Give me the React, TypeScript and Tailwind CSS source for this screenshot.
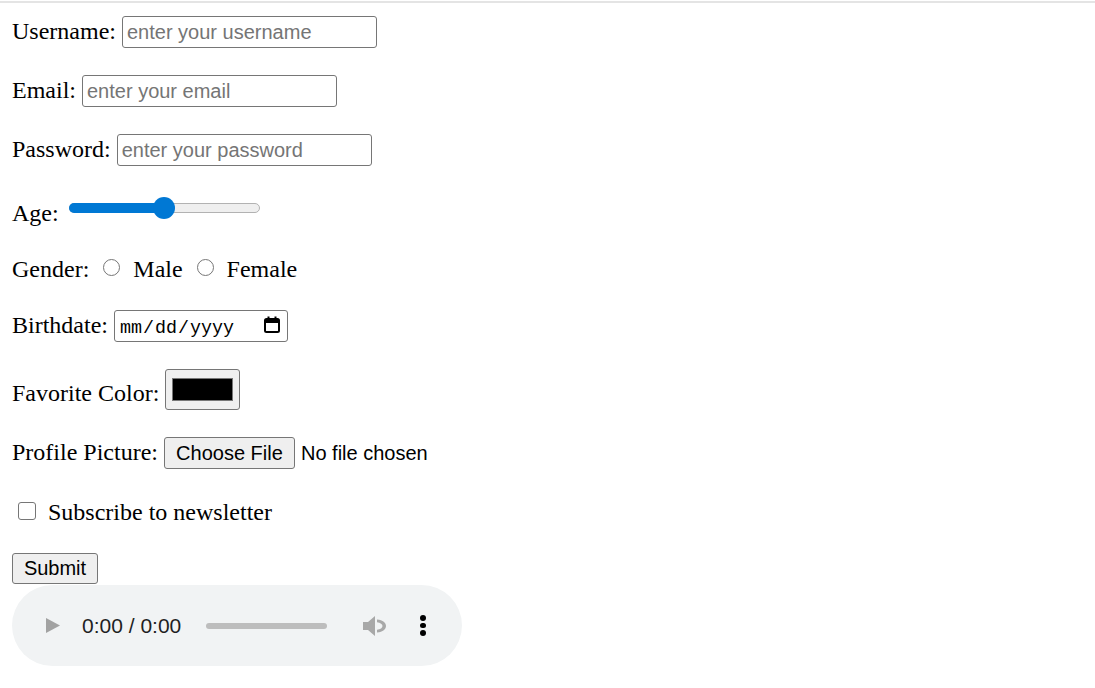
import React from "react";

const serif = "font-['Liberation_Serif','Times_New_Roman',serif] text-[24px] leading-[28px] text-black whitespace-nowrap";
const sans = "font-['Liberation_Sans',Arial,sans-serif]";

function TextBox({ placeholder }: { placeholder: string }) {
  return (
    <div
      className={`ml-[6px] w-[255px] h-[32px] shrink-0 border border-[#767676] rounded-[3px] pl-[4px] flex items-center text-[20px] leading-[23px] text-[#757575] whitespace-nowrap ${sans}`}
    >
      {placeholder}
    </div>
  );
}

function Radio({ ml }: { ml: string }) {
  return <div className={`${ml} mt-[4px] w-[17px] h-[17px] shrink-0 rounded-full border-[1.5px] border-[#767676] bg-white`} />;
}

export default function App() {
  return (
    <div className="min-h-screen bg-white text-black">
      <div className="h-[1px]" />
      <div className="h-[2px] bg-[#e4e4e4]" />
      <form className="pl-[12px] flex flex-col">
        {/* Username */}
        <div className="mt-[13px] h-[32px] flex items-start">
          <span className={`mt-[1px] ${serif}`}>Username:</span>
          <TextBox placeholder="enter your username" />
        </div>
        {/* Email */}
        <div className="mt-[27px] h-[32px] flex items-start">
          <span className={`mt-[1px] ${serif}`}>Email:</span>
          <TextBox placeholder="enter your email" />
        </div>
        {/* Password */}
        <div className="mt-[27px] h-[32px] flex items-start">
          <span className={`mt-[1px] ${serif}`}>Password:</span>
          <TextBox placeholder="enter your password" />
        </div>
        {/* Age */}
        <div className="mt-[30px] h-[24px] flex items-start">
          <span className={`mt-[3px] ${serif}`}>Age:</span>
          <div className="ml-[10px] relative w-[191px] h-[24px] shrink-0 flex items-center">
            <div className="w-full h-[10px] rounded-full bg-[#efefef] border border-[#b2b2b2]" />
            <div className="absolute left-0 top-[7px] w-[96px] h-[10px] rounded-l-full bg-[#0078d4]" />
            <div className="absolute left-[84px] top-[1px] w-[22px] h-[22px] rounded-full bg-[#0078d4]" />
          </div>
        </div>
        {/* Gender */}
        <div className="mt-[35px] h-[28px] flex items-start">
          <span className={serif}>Gender:</span>
          <Radio ml="ml-[14px]" />
          <span className={`ml-[13px] ${serif}`}>Male</span>
          <Radio ml="ml-[14px]" />
          <span className={`ml-[13px] ${serif}`}>Female</span>
        </div>
        {/* Birthdate */}
        <div className="mt-[27px] h-[32px] flex items-start">
          <span className={`mt-[1px] ${serif}`}>Birthdate:</span>
          <div className="ml-[6px] w-[174px] h-[32px] shrink-0 border border-[#767676] rounded-[3px] flex items-start pl-[5px] pr-[7px]">
            <div className="mt-[7px] flex font-['Liberation_Mono','DejaVu_Sans_Mono',monospace] text-[18.33px] leading-[21px] text-black">
              <span>mm</span>
              <span className="mx-[1px]">/</span>
              <span>dd</span>
              <span className="mx-[1px]">/</span>
              <span>yyyy</span>
            </div>
            <svg className="ml-auto mt-[5px]" width="16" height="17" viewBox="0 0 16 17">
              <rect x="1" y="3" width="14" height="13" rx="1.5" fill="none" stroke="#000" strokeWidth="2" />
              <rect x="1" y="3" width="14" height="4" fill="#000" />
              <rect x="3.5" y="0.5" width="2" height="3" fill="#000" />
              <rect x="10.5" y="0.5" width="2" height="3" fill="#000" />
            </svg>
          </div>
        </div>
        {/* Favorite color */}
        <div className="mt-[27px] h-[41px] flex items-start">
          <span className={`mt-[10px] ${serif}`}>Favorite Color:</span>
          <div className="ml-[6px] w-[75px] h-[41px] shrink-0 bg-[#efefef] border border-[#767676] rounded-[3px] flex items-center justify-center">
            <div className="w-[61px] h-[23px] bg-black border border-[#777777]" />
          </div>
        </div>
        {/* Profile picture */}
        <div className="mt-[27px] h-[32px] flex items-start">
          <span className={`mt-[1px] ${serif}`}>Profile Picture:</span>
          <div
            className={`ml-[6px] w-[131px] h-[32px] shrink-0 bg-[#efefef] border border-[#767676] rounded-[3px] flex items-center justify-center text-[20px] leading-[23px] text-black whitespace-nowrap ${sans}`}
          >
            Choose File
          </div>
          <span className={`ml-[6px] text-[20px] leading-[32px] text-black whitespace-nowrap ${sans}`}>No file chosen</span>
        </div>
        {/* Newsletter */}
        <div className="mt-[29px] h-[28px] flex items-start">
          <div className="ml-[6px] mt-[4px] w-[18px] h-[18px] shrink-0 rounded-[3px] border-[1.5px] border-[#767676] bg-white" />
          <span className={`ml-[12px] ${serif}`}>Subscribe to newsletter</span>
        </div>
        {/* Submit */}
        <div className="mt-[27px] flex">
          <div
            className={`w-[86px] h-[31px] bg-[#efefef] border border-[#767676] rounded-[3px] flex items-center justify-center text-[20px] leading-[23px] text-black ${sans}`}
          >
            Submit
          </div>
        </div>
        {/* Audio */}
        <div className="mt-[1px] w-[450px] h-[81px] rounded-full bg-[#f1f3f4] flex items-center pl-[34px]">
          <svg width="14" height="15" viewBox="0 0 14 15" className="shrink-0">
            <polygon points="0,0 14,7.5 0,15" fill="#a2a2a2" />
          </svg>
          <div className={`ml-[22px] w-[100px] shrink-0 text-[21px] leading-[23px] text-[#1f1f1f] whitespace-nowrap ${sans}`}>
            0:00 / 0:00
          </div>
          <div className="ml-[24px] w-[121px] h-[6px] shrink-0 rounded-full bg-[#bdbdbd]" />
          <svg width="25" height="22" viewBox="0 0 25 22" className="ml-[36px] shrink-0">
            <path d="M0 7 H5 L12 1 V21 L5 15 H0 Z" fill="#a8a8a8" />
            <path d="M14 4.5 C20 5 23 8 23 11 C23 14 20 17 14 17.5 L14 14.8 C17.5 14.3 19.5 12.8 19.5 11 C19.5 9.2 17.5 7.7 14 7.2 Z" fill="#a8a8a8" />
          </svg>
          <div className="ml-[32px] w-[6px] shrink-0 flex flex-col items-center gap-[2px]">
            <div className="w-[5.5px] h-[5.5px] rounded-full bg-black" />
            <div className="w-[5.5px] h-[5.5px] rounded-full bg-black" />
            <div className="w-[5.5px] h-[5.5px] rounded-full bg-black" />
          </div>
        </div>
      </form>
    </div>
  );
}
